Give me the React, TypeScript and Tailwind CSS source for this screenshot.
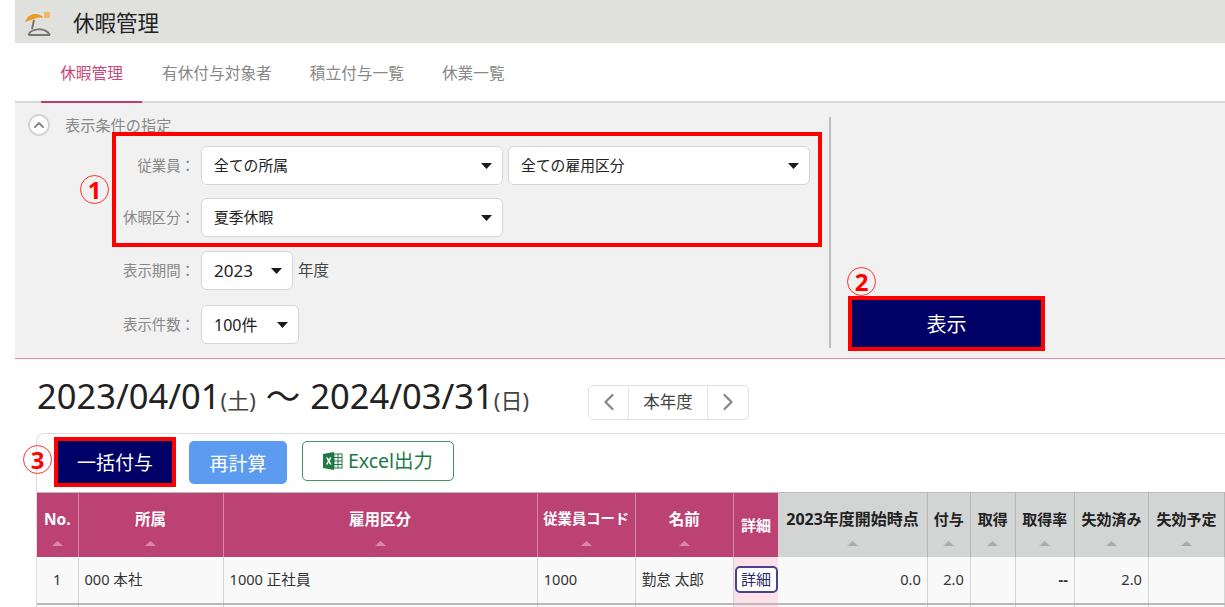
import { ChevronLeft, ChevronRight, ChevronUp } from "lucide-react";

const FONT = "font-['Noto_Sans','Noto_Sans_CJK_JP',sans-serif]";

function Caret() {
  return (
    <svg width="11" height="6" viewBox="0 0 11 6" className="shrink-0">
      <path d="M0 0h11L5.5 6z" fill="#1a1a22" />
    </svg>
  );
}

function SelectBox({ value, width, size = "text-[14.8px]" }: { value: string; width: string; size?: string }) {
  return (
    <div className={`${width} h-[39px] flex items-center justify-between pl-[12px] pr-[10px] bg-white border border-[#d6d6d6] rounded-[6px] ${size} text-[#222]`}>
      <span>{value}</span>
      <Caret />
    </div>
  );
}

function Label({ children }: { children: string }) {
  return <div className="w-[86px] pr-[6px] text-right text-[14.4px] text-[#888] whitespace-nowrap">{children}</div>;
}

function Circled({ n, className }: { n: string; className: string }) {
  return (
    <div className={`absolute w-[29px] h-[29px] rounded-full border border-[#ff3030] flex items-center justify-center text-[24px] font-bold text-[#ff0000] leading-none ${className}`}>
      {n}
    </div>
  );
}

function ExcelIcon() {
  return (
    <svg width="20" height="18" viewBox="0 0 20 18">
      <rect x="7" y="2" width="12" height="14" fill="#fff" stroke="#1d7a45" strokeWidth="1" />
      <path d="M11 2v14M15 2v14M7 5.5h12M7 9h12M7 12.5h12" stroke="#1d7a45" strokeWidth="1" />
      <path d="M0 2l11-2v18L0 16z" fill="#1d7a45" />
      <path d="M3 5.5h1.8l1 2 1-2H8.600L6.700 9l2 3.500H7L5.800 10.300 4.600 12.500H2.900L4.900 9z" fill="#fff" />
    </svg>
  );
}

const pinkHeads = [
  { label: "No.", w: "w-[41px]", size: "text-[15.5px]" },
  { label: "所属", w: "w-[145px]", size: "text-[15.5px]" },
  { label: "雇用区分", w: "w-[314px]", size: "text-[15.5px]" },
  { label: "従業員コード", w: "w-[98px]", size: "text-[14.3px]" },
  { label: "名前", w: "w-[98px]", size: "text-[15.5px]" },
];

const grayHeads = [
  { label: "2023年度開始時点", w: "w-[149px]", size: "text-[16px]" },
  { label: "付与", w: "w-[43px]", size: "text-[15px]" },
  { label: "取得", w: "w-[45px]", size: "text-[15px]" },
  { label: "取得率", w: "w-[59px]", size: "text-[15px]" },
  { label: "失効済み", w: "w-[74px]", size: "text-[15px]" },
  { label: "失効予定", w: "w-[76px]", size: "text-[15px]" },
];

function SortMark({ light }: { light?: boolean }) {
  return (
    <svg width="11" height="5" viewBox="0 0 11 5" className="mx-auto mt-[12px]">
      <path d="M5.500 0L11 5H0z" fill={light ? "#d98aa8" : "#a9acac"} />
    </svg>
  );
}

const cell = "border-r border-[#d4d4d4] px-[6px] text-[14.6px] text-[#333] bg-[#f9f9f9] whitespace-nowrap";

export default function App() {
  return (
    <div className={`${FONT} relative w-[1225px] h-[607px] overflow-hidden bg-white pl-[15px]`}>
      <div className="h-[43px] bg-[#e0e0de] flex items-center pl-[10px]">
        <svg width="26" height="24" viewBox="0 0 26 24" className="mt-[5px]">
          <rect x="19" y="0" width="6" height="6" rx="1" fill="#f9b65a" />
          <path d="M0 10C2 4 7 1.500 11 2c4 .5 6.500 2 7 4-3-.8-6-.6-9 1-3 1-6 2-9 3z" fill="#eb9c20" />
          <path d="M9 8L7 17" stroke="#77776e" strokeWidth="2" fill="none" />
          <path d="M3.500 23C6 16 20 15 25 23" stroke="#77776e" strokeWidth="2" fill="none" />
          <path d="M3.500 23H25" stroke="#77776e" strokeWidth="2" />
        </svg>
        <div className="ml-[22px] text-[21.500px] text-[#222] pt-[3px]">休暇管理</div>
      </div>

      <div className="h-[60px] flex items-stretch pl-[26px] border-b-2 border-[#d8d8d8]">
        <div className="w-[101px] h-[60px] flex items-center justify-center pt-[4px] text-[15.700px] text-[#c8487a] border-b-2 border-[#c2386f]">休暇管理</div>
        <div className="flex items-center gap-[38px] ml-[20px] pt-[4px] text-[15.700px] text-[#888]">
          <span>有休付与対象者</span>
          <span>積立付与一覧</span>
          <span>休業一覧</span>
        </div>
      </div>

      <div className="h-[256px] bg-[#f1f1f1] border-b border-[#e08aa8] flex">
        <div className="w-[814px] mt-[13px] shrink-0">
          <div className="flex items-center pl-[13px] h-[22px] -mt-[2px]">
            <div className="w-[22px] h-[22px] rounded-full bg-white border-2 border-[#d4d4d4] flex items-center justify-center">
              <ChevronUp size={16} strokeWidth={3} color="#888" />
            </div>
            <span className="ml-[15px] text-[15.200px] text-[#888]">表示条件の指定</span>
          </div>
          <div className="flex flex-col mt-[10px] pl-[100px]">
            <div className="flex items-center h-[39px]">
              <Label>従業員：</Label>
              <SelectBox value="全ての所属" width="w-[302px]" />
              <div className="w-[5px]" />
              <SelectBox value="全ての雇用区分" width="w-[302px]" />
            </div>
            <div className="flex items-center h-[39px] mt-[13px]">
              <Label>休暇区分：</Label>
              <SelectBox value="夏季休暇" width="w-[302px]" />
            </div>
            <div className="flex items-center h-[39px] mt-[14px]">
              <Label>表示期間：</Label>
              <SelectBox value="2023" width="w-[92px]" size="text-[17px]" />
              <span className="ml-[5px] text-[15.500px] text-[#444]">年度</span>
            </div>
            <div className="flex items-center h-[39px] mt-[15px]">
              <Label>表示件数：</Label>
              <SelectBox value="100件" width="w-[98px]" size="text-[16px]" />
            </div>
          </div>
        </div>
        <div className="w-[2px] h-[231px] mt-[14px] bg-[#bdbdbd] shrink-0" />
        <div className="pl-[17px] pt-[193px]">
          <button className="w-[197px] h-[55px] bg-[#000066] border-4 border-[#ff0000] pt-[3px] text-white text-[20px]">表示</button>
        </div>
      </div>

      <div className="flex items-center h-[74px] pl-[22px]">
        <div className="text-[34.500px] text-[#222] leading-none whitespace-nowrap">
          2023/04/01<span className="text-[22px] text-[#444]">(土)</span>
          <span className="mx-[10px]">〜</span>
          2024/03/31<span className="text-[22px] text-[#444]">(日)</span>
        </div>
        <div className="ml-[59px] mt-[12px] flex h-[35px] items-stretch border border-[#e2e2e2] rounded-[5px] bg-white">
          <div className="w-[39px] flex items-center justify-center">
            <ChevronLeft size={28} strokeWidth={2} color="#888" />
          </div>
          <div className="w-[80px] flex items-center justify-center border-x border-[#e2e2e2] text-[16.500px] text-[#444]">本年度</div>
          <div className="w-[40px] flex items-center justify-center">
            <ChevronRight size={28} strokeWidth={2} color="#888" />
          </div>
        </div>
      </div>

      <div className="ml-[21px] border-t border-l border-[#dedede] rounded-tl-[8px]">
        <div className="h-[58px] flex items-start pl-[17px] pt-[3px]">
          <button className="w-[122px] h-[50px] bg-[#000066] border-4 border-[#ff0000] pt-[3px] text-white text-[19px]">一括付与</button>
          <button className="ml-[13px] mt-[4px] w-[98px] h-[43px] rounded-[5px] bg-[#5b9bf0] pt-[3px] text-white text-[19px]">再計算</button>
          <button className="ml-[15px] mt-[4px] w-[152px] h-[40px] rounded-[5px] bg-white border border-[#3f9468] text-[#1d7a45] text-[19.500px] flex items-center justify-center gap-[5px]">
            <ExcelIcon />
            Excel出力
          </button>
        </div>
        <table className="table-fixed border-collapse w-[1188px]">
          <thead>
            <tr className="h-[64px] font-bold">
              {pinkHeads.map((h) => (
                <th key={h.label} className={`${h.w} ${h.size} bg-[#bb4272] text-white border-r border-[#cf8ba6] border-t border-t-[#bcbcbc] p-0 align-top pt-[16px] whitespace-nowrap`}>
                  <div className="leading-[20px]">{h.label}</div>
                  <SortMark light />
                </th>
              ))}
              <th className="w-[45px] bg-[#bb4272] text-white border-t border-t-[#bcbcbc] p-0 text-[15px]">詳細</th>
              {grayHeads.map((h) => (
                <th key={h.label} className={`${h.w} ${h.size} bg-[#d3d5d5] text-[#222] border-r border-[#b4b6b6] border-t border-t-[#bcbcbc] p-0 align-top pt-[16px] whitespace-nowrap`}>
                  <div className="leading-[20px]">{h.label}</div>
                  <SortMark />
                </th>
              ))}
            </tr>
          </thead>
          <tbody>
            <tr className="h-[47px] border-b-2 border-[#b9b9b9]">
              <td className={`${cell} text-center`}>1</td>
              <td className={cell}>000 本社</td>
              <td className={cell}>1000 正社員</td>
              <td className={cell}>1000</td>
              <td className={cell}>勤怠 太郎</td>
              <td className="bg-[#fde0ea] p-0 text-center">
                <span className="inline-flex items-center justify-center w-[43px] h-[27px] rounded-[5px] bg-white border-2 border-[#4a4290] text-[15px] text-[#2a2a6a]">詳細</span>
              </td>
              <td className={`${cell} text-right`}>0.0</td>
              <td className={`${cell} text-right`}>2.0</td>
              <td className={cell}></td>
              <td className={`${cell} text-right font-bold`}>--</td>
              <td className={`${cell} text-right`}>2.0</td>
              <td className={cell}></td>
            </tr>
            <tr className="h-[40px]">
              <td className={cell}></td>
              <td className={cell}></td>
              <td className={cell}></td>
              <td className={cell}></td>
              <td className={cell}></td>
              <td className="bg-[#fde0ea]"></td>
              <td className={cell}></td>
              <td className={cell}></td>
              <td className={cell}></td>
              <td className={cell}></td>
              <td className={cell}></td>
              <td className={cell}></td>
            </tr>
          </tbody>
        </table>
      </div>

      <div className="absolute left-[112px] top-[132px] w-[710px] h-[115px] border-4 border-[#ff0000] pointer-events-none" />
      <Circled n="1" className="left-[80px] top-[175px]" />
      <Circled n="2" className="left-[847px] top-[267px]" />
      <Circled n="3" className="left-[23px] top-[445px]" />
    </div>
  );
}
